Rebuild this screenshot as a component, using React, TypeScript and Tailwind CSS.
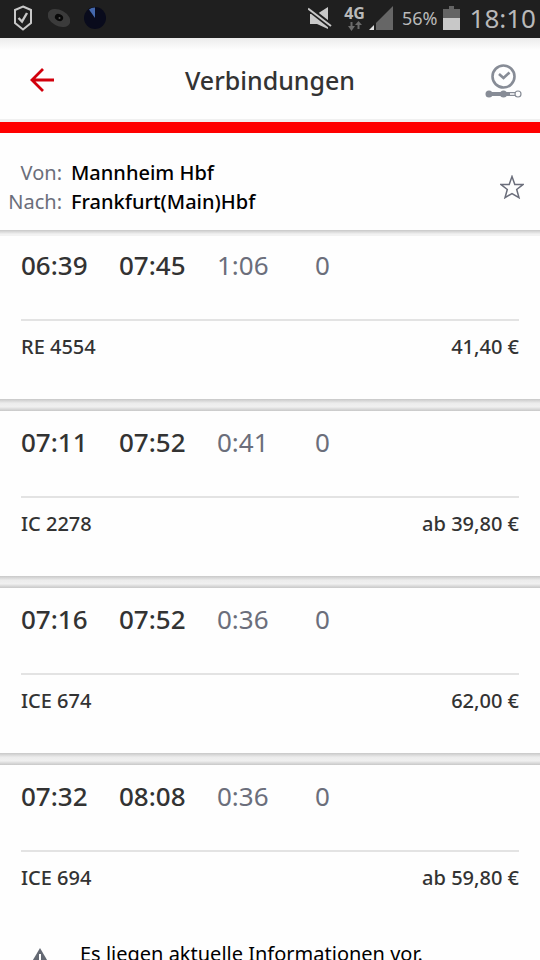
import { Fragment } from 'react'

type Connection = {
  departure: string
  arrival: string
  duration: string
  changes: number
  train: string
  price: string
  notice?: string
}

const connections: Connection[] = [
  { departure: '06:39', arrival: '07:45', duration: '1:06', changes: 0, train: 'RE 4554', price: '41,40 €' },
  { departure: '07:11', arrival: '07:52', duration: '0:41', changes: 0, train: 'IC 2278', price: 'ab 39,80 €' },
  { departure: '07:16', arrival: '07:52', duration: '0:36', changes: 0, train: 'ICE 674', price: '62,00 €' },
  {
    departure: '07:32',
    arrival: '08:08',
    duration: '0:36',
    changes: 0,
    train: 'ICE 694',
    price: 'ab 59,80 €',
    notice: 'Es liegen aktuelle Informationen vor.',
  },
]

function StatusBar() {
  return (
    <div className="flex h-[38px] items-center justify-between bg-[#1f1f1f] pr-1 pb-0.5 pl-[13px] text-[#b9b9b9]">
      <div className="flex items-center gap-[15px]">
        {/* shield */}
        <svg width="20" height="26" viewBox="0 0 20 26" fill="none" stroke="#c8c8c8" strokeWidth="2">
          <path d="M10 1.500 18 5v13L10 24.500 2 18V5Z" />
          <path d="m5.500 13 3.500 3.500 5-8.500" strokeWidth="2.400" />
        </svg>
        {/* disc */}
        <svg width="22" height="20" viewBox="0 0 22 20">
          <ellipse cx="11" cy="10" rx="12" ry="8" fill="#3b3b3b" transform="rotate(28 11 10)" />
          <ellipse cx="11" cy="9.500" rx="4.300" ry="3.300" fill="#080808" transform="rotate(28 11 9.500)" />
          <circle cx="11.500" cy="10" r="1" fill="#555" />
        </svg>
        {/* clock pie */}
        <svg width="22" height="22" viewBox="0 0 22 22" className="-ml-px">
          <circle cx="11" cy="11" r="11" fill="#090b1c" />
          <path d="M11 11V.500C8.500.500 6.500 1.200 5 2.500Z" fill="#4468ad" />
        </svg>
      </div>

      <div className="flex items-center">
        {/* muted speaker */}
        <svg width="24" height="24" viewBox="0 0 24 24">
          <path d="M2 8h7L20 1v22L9 18H2Z" fill="#c8c8c8" />
          <path d="m0 2 23 18" stroke="#1f1f1f" strokeWidth="5.500" />
          <path d="m0 2.500 23 17.500" stroke="#c8c8c8" strokeWidth="2" />
        </svg>
        <div className="ml-3 flex flex-col items-center">
          <span className="text-[16px] leading-4 font-bold">4G</span>
          <svg width="14" height="10" viewBox="0 0 14 10" fill="#6b6b6b">
            <path d="M2.500 1h2v4h2.500L3.500 10 0 5h2.500Z" />
            <path d="M9.500 8h2V4H14L10.500 0 7 4h2.500Z" />
          </svg>
        </div>
        <svg width="24" height="24" viewBox="0 0 24 24" className="ml-1">
          <path d="M24 0v24H7V17Z" fill="#666" />
          <path d="M5 19v5H0Z" fill="#e0e0e0" />
        </svg>
        <span className="ml-[9px] text-[18px] leading-6">56%</span>
        <svg width="17" height="24" viewBox="0 0 17 24" className="ml-[5px]">
          <path d="M6 0h5v3h6v9H0V3h6Z" fill="#646464" />
          <path d="M0 12h17v12H0Z" fill="#c8c8c8" />
        </svg>
        <span className="ml-[10px] text-[26px] leading-8">18:10</span>
      </div>
    </div>
  )
}

function ConnectionCard({ connection }: { connection: Connection }) {
  return (
    <li className="bg-[#fefefe] px-[21px] pt-[13px] pb-[38px] text-[#333]">
      <div className="grid grid-cols-[98px_98px_98px_1fr] text-[26px] leading-9">
        <span className="font-medium">{connection.departure}</span>
        <span className="font-medium">{connection.arrival}</span>
        <span className="text-[#6b6e7b]">{connection.duration}</span>
        <span className="text-[#6b6e7b]">{connection.changes}</span>
      </div>
      <div className="mt-9 flex justify-between border-t-2 border-[#e3e3e3] pt-3 text-[20px] leading-7 font-medium">
        <span>{connection.train}</span>
        <span>{connection.price}</span>
      </div>
      {connection.notice && (
        <div className="mt-12 flex items-center gap-[30px] pl-[9px] text-[20px] leading-7 text-black">
          <svg width="20" height="22" viewBox="0 0 20 22">
            <path d="M10 5 20 22H0Z" fill="#646973" />
            <path d="M9 11h2v6H9ZM9 18.500h2v2H9Z" fill="#fff" />
          </svg>
          <span>{connection.notice}</span>
        </div>
      )}
    </li>
  )
}

export default function App() {
  return (
    <div className="h-screen overflow-hidden bg-[#fefefe] font-['Noto_Sans',sans-serif]">
      <StatusBar />

      <header className="border-b-[11px] border-[#ff0000]">
        <div className="flex h-[84px] items-center justify-between border-b-3 border-[#f0f0f0] bg-linear-to-b from-[#ececec] to-[#fefefe] to-15% pr-[18px] pl-[29px]">
          <button aria-label="Zurück" className="pt-0.5">
            <svg width="26" height="26" viewBox="0 0 26 26" fill="none" stroke="#d2000c" strokeWidth="2.800">
              <path d="M25 13H3M14 2 3 13l11 11" />
            </svg>
          </button>
          <h1 className="pt-0.5 text-[25px] leading-9 font-medium text-[#333]">Verbindungen</h1>
          <button aria-label="Frühere und spätere Verbindungen" className="pt-1">
            <svg width="37" height="36" viewBox="0 0 37 36" fill="none" stroke="#878c96">
              <circle cx="18.500" cy="13.500" r="11" strokeWidth="2.600" />
              <path d="m14 11 4.500 4 6-5.500" strokeWidth="2.600" />
              <path d="M4 31h16" strokeWidth="4" />
              <path d="M20 31h11" strokeWidth="4" />
              <path d="M25 31h6" strokeWidth="2" stroke="#e2e3e6" />
              <circle cx="4" cy="31" r="3.500" fill="#878c96" stroke="none" />
              <circle cx="18.500" cy="31" r="3.500" fill="#878c96" stroke="none" />
              <circle cx="33" cy="31" r="3" fill="#fefefe" strokeWidth="1.200" />
            </svg>
          </button>
        </div>
      </header>

      <main>
        <section className="relative flex items-center justify-between pt-[25px] pr-4 pb-3.5">
          <dl className="grid grid-cols-[62px_1fr] gap-x-[9px] text-[20px] leading-[29px]">
            <dt className="text-right text-[#6b6e7b]">Von:</dt>
            <dd className="font-medium text-black">Mannheim Hbf</dd>
            <dt className="text-right text-[#6b6e7b]">Nach:</dt>
            <dd className="font-medium text-black">Frankfurt(Main)Hbf</dd>
          </dl>
          <button aria-label="Als Favorit speichern">
            <svg width="24" height="24" viewBox="0 0 24 24" fill="none" stroke="#6b6e7b" strokeWidth="1.500">
              <path d="m12 1.500 2.800 8H23l-6.300 5 2.300 8.200-7-4.200-7 4.200 2.300-8.200L1 9.500h8.200Z" />
            </svg>
          </button>
          {/* shadow cast on the list */}
          <div className="absolute inset-x-0 top-full h-1.5 bg-linear-to-b from-[#c8c8c8] to-[#f2f2f2] to-70%" />
        </section>

        <ul className="mt-1">
          {connections.map((connection, i) => (
            <Fragment key={connection.departure}>
              {i > 0 && (
                <li
                  role="presentation"
                  className="h-3 bg-[linear-gradient(#c8c8c8,#ececec_35%,#f0f0f0_65%,#dedede_80%,#c8c8c8)]"
                />
              )}
              <ConnectionCard connection={connection} />
            </Fragment>
          ))}
        </ul>
      </main>
    </div>
  )
}
